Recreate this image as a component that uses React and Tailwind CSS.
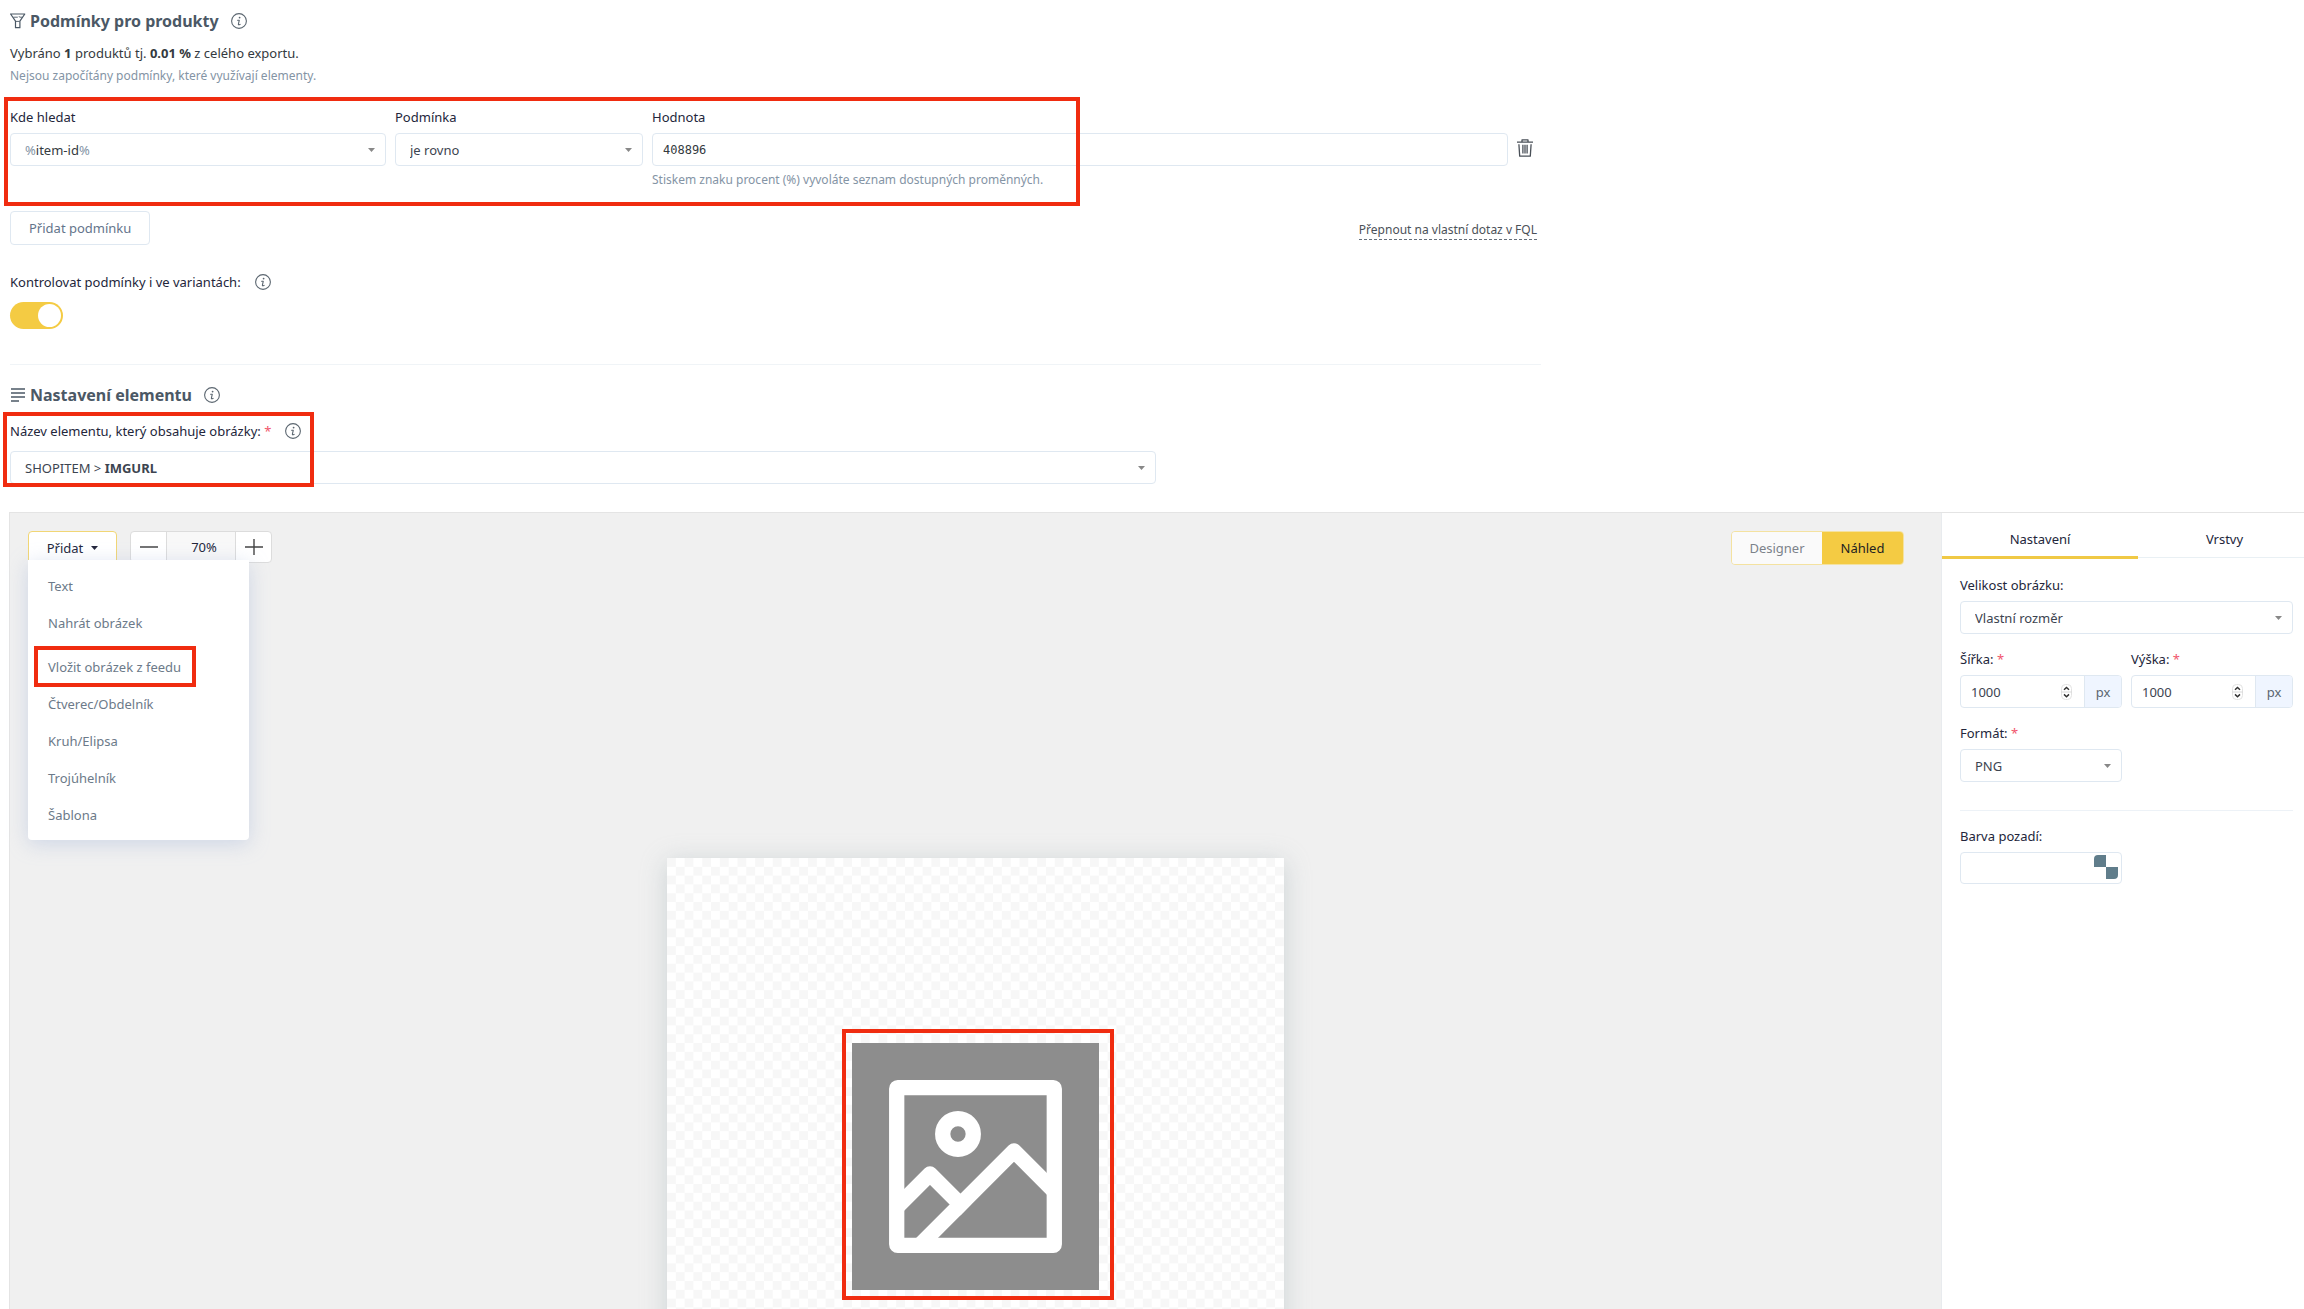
import { useState } from 'react'

const MENU_ITEMS = [
  'Text',
  'Nahrát obrázek',
  'Vložit obrázek z feedu',
  'Čtverec/Obdelník',
  'Kruh/Elipsa',
  'Trojúhelník',
  'Šablona',
]

function InfoIcon() {
  return (
    <svg className="size-4 shrink-0 text-[#5b6670]" viewBox="0 0 16 16" fill="none" stroke="currentColor">
      <circle cx="8" cy="8" r="7.4" strokeWidth="1.1" />
      <circle cx="8.6" cy="4.6" r="0.9" fill="currentColor" stroke="none" />
      <path d="M6.6 7.2h1.7l-.9 3.9c-.1.6.2.8.7.7l1-.4" strokeWidth="1.1" strokeLinecap="round" strokeLinejoin="round" />
    </svg>
  )
}

function InfoButton() {
  return (
    <button type="button" aria-label="Nápověda" className="flex">
      <InfoIcon />
    </button>
  )
}

function FilterIcon() {
  return (
    <svg className="size-4 shrink-0" viewBox="0 0 16 16" fill="none" stroke="#4b5865" strokeLinejoin="round">
      <path d="M.6 1h14.2L9.9 8.2v6.5H5.5V8.2z" strokeWidth="1.2" />
      <path d="M3.4 4.2h4.4M9 3.2l.6 1h2.6M5.8 8.4h3.8" strokeWidth=".9" />
    </svg>
  )
}

function LinesIcon() {
  return (
    <svg className="size-4 shrink-0" viewBox="0 0 16 16" fill="none" stroke="#4b5865" strokeWidth="1.3">
      <path d="M1 2h14M1 6h14M1 10h14M1 14h8" />
    </svg>
  )
}

function TrashIcon() {
  return (
    <svg className="h-[18px] w-4" viewBox="0 0 16 18" fill="none" stroke="#4a5058" strokeWidth="1.3" strokeLinejoin="round">
      <path d="M0 3.2h16M5 3V.9h6V3M1.9 5.2l.8 12h10.6l.8-12M5.9 5.8v8.6M8 5.8v8.6M10.1 5.8v8.6" />
    </svg>
  )
}

function Required() {
  return <span className="text-[#f1556c]">*</span>
}

function Highlight({ className }) {
  return <div aria-hidden="true" className={`pointer-events-none absolute z-20 border-4 border-[#f02c10] ${className}`} />
}

// `display` replaces the native label when the value needs mixed formatting
function Select({ id, value, display }) {
  return (
    <div className="relative">
      <select
        id={id}
        className={`h-[33px] w-full appearance-none rounded border border-[#dfe8f1] bg-white pl-3.5 pr-8 ${display ? 'text-transparent' : 'text-[#3c4450]'}`}
      >
        <option>{value}</option>
      </select>
      {display && (
        <span aria-hidden="true" className="pointer-events-none absolute inset-y-0 left-[15px] flex items-center whitespace-pre">
          {display}
        </span>
      )}
      <svg className="pointer-events-none absolute right-[11px] top-[15px] h-1 w-[7px]" viewBox="0 0 7 4" fill="#888">
        <path d="M0 0h7L3.5 4z" />
      </svg>
    </div>
  )
}

function SectionTitle({ icon, children }) {
  return (
    <div className="flex h-6 items-center">
      {icon}
      <h2 className="ml-1 mr-3 text-base font-bold text-[#4b5865]">{children}</h2>
      <InfoButton />
    </div>
  )
}

function Conditions() {
  return (
    <section>
      <SectionTitle icon={<FilterIcon />}>Podmínky pro produkty</SectionTitle>
      <p className="mt-[9px] leading-[22px] text-[#343a40]">
        Vybráno <b>1</b> produktů tj. <b>0.01 %</b> z celého exportu.
      </p>
      <p className="text-xs leading-6 text-[#8494a5]">Nejsou započítány podmínky, které využívají elementy.</p>

      <div className="relative mt-[19px] flex gap-[9px]">
        <Highlight className="-left-[6px] -top-[10px] h-[109px] w-[1076px]" />
        <div className="w-[376px]">
          <label htmlFor="where" className="mb-1.5 block">Kde hledat</label>
          <Select
            id="where"
            value="%item-id%"
            display={
              <>
                <span className="text-[#8494a5]">%</span>
                <span className="text-[#343a40]">item-id</span>
                <span className="text-[#8494a5]">%</span>
              </>
            }
          />
        </div>
        <div className="w-[248px]">
          <label htmlFor="condition" className="mb-1.5 block">Podmínka</label>
          <Select id="condition" value="je rovno" />
        </div>
        <div className="flex-1">
          <label htmlFor="value" className="mb-1.5 block">Hodnota</label>
          <input
            id="value"
            defaultValue="408896"
            className="block h-[33px] w-full rounded border border-[#dfe8f1] px-2.5 font-['DejaVu_Sans_Mono',monospace] text-xs text-[#343a40]"
          />
          <p className="mt-1 text-xs leading-5 text-[#8494a5]">
            Stiskem znaku procent (%) vyvoláte seznam dostupných proměnných.
          </p>
        </div>
        <button type="button" aria-label="Smazat podmínku" className="mr-2 mt-8 self-start">
          <TrashIcon />
        </button>
      </div>

      <div className="mt-[21px] flex items-start justify-between">
        <button type="button" className="h-[34px] rounded border border-[#dfe8f1] bg-white px-[18px] text-[#64748b]">
          Přidat podmínku
        </button>
        <a href="#fql" className="mr-1 mt-2.5 border-b border-dashed border-[#66707c] text-xs leading-[18px] text-[#4b5158]">
          Přepnout na vlastní dotaz v FQL
        </a>
      </div>

      <div className="mt-[27px] flex items-center gap-3.5">
        <label htmlFor="variants">Kontrolovat podmínky i ve variantách:</label>
        <InfoButton />
      </div>
      <input
        id="variants"
        type="checkbox"
        role="switch"
        defaultChecked
        className="mt-2.5 flex h-[27px] w-[53px] appearance-none items-center rounded-full bg-gray-300 px-0.5 before:size-[23px] before:rounded-full before:bg-white checked:justify-end checked:bg-[#f4cb43]"
      />
    </section>
  )
}

function ElementSettings() {
  return (
    <section>
      <SectionTitle icon={<LinesIcon />}>Nastavení elementu</SectionTitle>
      <div className="relative mt-3.5">
        <Highlight className="-left-[7px] -top-[9px] h-[75px] w-[311px]" />
        <div className="mb-2.5 flex items-center gap-3.5">
          <label htmlFor="element">
            Název elementu, který obsahuje obrázky: <Required />
          </label>
          <InfoButton />
        </div>
        <div className="w-[1146px]">
          <Select
            id="element"
            value="SHOPITEM > IMGURL"
            display={
              <span className="text-[#3c4450]">
                SHOPITEM &gt; <b>IMGURL</b>
              </span>
            }
          />
        </div>
      </div>
    </section>
  )
}

function AddMenu() {
  const [open, setOpen] = useState(true)
  return (
    <div className="relative">
      <button
        type="button"
        aria-expanded={open}
        onClick={() => setOpen(!open)}
        className="flex h-[34px] w-[89px] items-center justify-center gap-2 rounded border border-[#f1d675] bg-white"
      >
        Přidat
        <svg className="h-1 w-[7px]" viewBox="0 0 7 4" fill="currentColor">
          <path d="M0 0h7L3.5 4z" />
        </svg>
      </button>
      {open && (
        <ul className="absolute left-0 top-[29px] z-10 w-[221px] rounded-b bg-white py-[7px] text-[#6c7a89] shadow-[0_4px_20px_rgba(154,175,215,0.4)]">
          {MENU_ITEMS.map((item) => {
            const marked = item === 'Vložit obrázek z feedu'
            return (
              <li key={item} className={marked ? 'relative mt-[7px]' : ''}>
                {marked && <Highlight className="left-[6px] -top-[2px] h-[41px] w-[162px]" />}
                <button type="button" className="block h-[37px] w-full px-5 text-left">{item}</button>
              </li>
            )
          })}
        </ul>
      )}
    </div>
  )
}

function ZoomControl() {
  return (
    <div className="flex h-8 overflow-hidden rounded border border-[#dcdcdc] bg-white">
      <button type="button" aria-label="Oddálit" className="flex w-[35px] items-center justify-center">
        <svg className="size-[18px]" viewBox="0 0 18 18" stroke="#444" strokeWidth="1.4">
          <path d="M0 9h18" />
        </svg>
      </button>
      <output className="flex w-[70px] items-center justify-center border-x border-[#dcdcdc] bg-[#f8f8f8] pl-1.5">70%</output>
      <button type="button" aria-label="Přiblížit" className="flex w-[35px] items-center justify-center">
        <svg className="size-[18px]" viewBox="0 0 18 18" stroke="#444" strokeWidth="1.4">
          <path d="M0 9h18M9 1v16" />
        </svg>
      </button>
    </div>
  )
}

function PlaceholderImage() {
  return (
    <div className="relative">
      <Highlight className="-left-[10px] -top-[14px] h-[271px] w-[272px]" />
      <svg className="block size-[247px]" viewBox="0 0 247 247" fill="none" stroke="#fff" strokeWidth="15.3">
        <path fill="#8d8d8d" stroke="none" d="M0 0h247v247H0z" />
        <rect x="44.7" y="44.7" width="157.6" height="157.6" rx="1" strokeLinejoin="round" />
        <circle cx="106" cy="91" r="15.3" />
        <path d="M68 202 162 108 203 149M44 165 78 131 114 167" strokeLinejoin="round" />
      </svg>
    </div>
  )
}

function Workspace() {
  return (
    <div className="flex min-w-0 flex-1 flex-col items-center border-l border-[#e4e4e4] bg-[#f0f0f0]">
      <div className="flex w-full items-start justify-between pl-[18px] pr-[37px] pt-[18px]">
        <div className="flex items-start gap-[13px]">
          <AddMenu />
          <ZoomControl />
        </div>
        <div className="flex h-[34px] overflow-hidden rounded border border-[#f4e2a0]">
          <button type="button" className="w-[90px] bg-[#fafafa] text-[#7c828a]">Designer</button>
          <button type="button" className="w-[81px] bg-[#f4cb43] text-[#222]">Náhled</button>
        </div>
      </div>
      <div className="mt-[293px] flex size-[617px] shrink-0 items-center justify-center bg-white bg-[repeating-conic-gradient(#fff_0_25%,#f7f7f7_0_50%)] bg-[length:calc(100%/35)_calc(100%/35)] shadow-[0_4px_24px_rgba(160,175,180,0.45)]">
        <PlaceholderImage />
      </div>
    </div>
  )
}

function SizeField({ id, label }) {
  return (
    <div className="min-w-0 flex-1">
      <label htmlFor={id} className="mb-1.5 block">
        {label} <Required />
      </label>
      <div className="relative flex h-[33px] overflow-hidden rounded border border-[#dfe8f1]">
        <input id={id} defaultValue="1000" inputMode="numeric" className="min-w-0 flex-1 pl-2.5 text-[#3c4450]" />
        <svg className="pointer-events-none absolute right-[49px] top-2 h-4 w-[11px]" viewBox="0 0 11 16" fill="none">
          <rect x=".5" y=".5" width="10" height="15" rx="4" stroke="#e2e2e2" />
          <path d="M0 8h11" stroke="#d8d8d8" />
          <path d="m3 5.8 2.5-2.3L8 5.8M3 10.4l2.5 2.3L8 10.4" stroke="#333" strokeWidth="1.5" />
        </svg>
        <span className="flex w-[37px] items-center justify-center border-l border-[#dfe8f1] bg-[#eff5ff] text-[#5b6670]">px</span>
      </div>
    </div>
  )
}

function Sidebar() {
  return (
    <aside className="w-[363px] shrink-0 overflow-hidden border-l border-[#e8ebee] bg-white">
      <div role="tablist" className="flex h-[45px] border-b border-[#e9f0f4]">
        <button type="button" role="tab" aria-selected="true" className="h-[46px] w-[196px] shrink-0 border-b-[3px] border-[#f0c945] pb-2 pt-4 leading-5">
          Nastavení
        </button>
        <button type="button" role="tab" aria-selected="false" className="h-[46px] w-[173px] shrink-0 border-b-[3px] border-transparent pb-2 pt-4 leading-5">
          Vrstvy
        </button>
      </div>
      <div className="pl-[18px] pr-[11px] pt-[17px]">
        <label htmlFor="size" className="mb-1.5 block">Velikost obrázku:</label>
        <Select id="size" value="Vlastní rozměr" />
        <div className="mt-[15px] flex gap-[9px]">
          <SizeField id="width" label="Šířka:" />
          <SizeField id="height" label="Výška:" />
        </div>
        <div className="mt-[15px] w-[162px]">
          <label htmlFor="format" className="mb-1.5 block">
            Formát: <Required />
          </label>
          <Select id="format" value="PNG" />
        </div>
        <hr className="mb-[15px] mt-7 border-[#edf2f7]" />
        <label htmlFor="background" className="mb-1.5 block">Barva pozadí:</label>
        <div className="relative w-[162px]">
          <input id="background" className="block h-8 w-full rounded border border-[#dfe8f1] pl-2.5 pr-8" />
          <svg className="absolute right-1 top-[3px] size-6" viewBox="0 0 24 24" fill="#607d8b">
            <path d="M4 0h8v12H0V4a4 4 0 0 1 4-4zM12 12h12v8a4 4 0 0 1-4 4h-8z" />
          </svg>
        </div>
      </div>
    </aside>
  )
}

export default function App() {
  return (
    <div className="flex h-screen flex-col overflow-hidden bg-white pl-[9px] pt-[9px] font-['Noto_Sans',sans-serif] text-[13px] leading-5 text-[#23263b]">
      <div className="max-w-[1532px] pl-px">
        <Conditions />
        <hr className="mb-[18px] mt-[35px] border-[#f0f4f7]" />
        <ElementSettings />
      </div>
      <div className="mt-7 flex min-h-0 flex-1 border-t border-[#e4e4e4]">
        <Workspace />
        <Sidebar />
      </div>
    </div>
  )
}
